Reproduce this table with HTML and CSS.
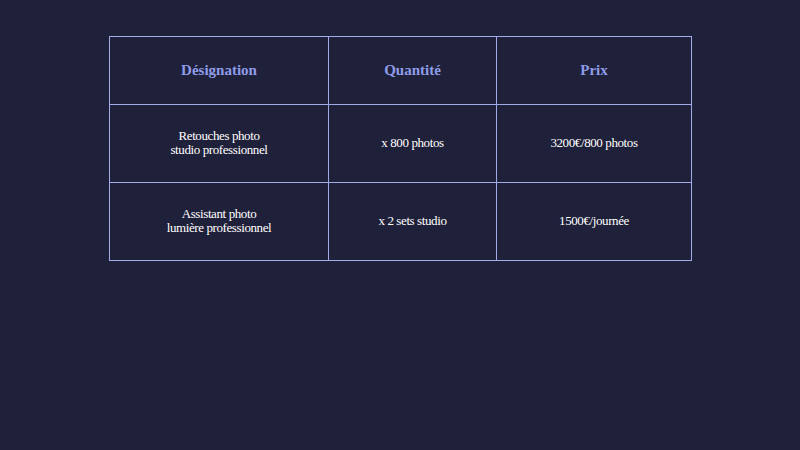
FILE: index.html
```html
<!DOCTYPE html>
<html lang="fr">
<head>
<meta charset="utf-8">
<link rel="stylesheet" href="styles.css">
</head>
<body>
<main class="page">
  <table class="price-table">
    <colgroup>
      <col class="c1"><col class="c2"><col class="c3">
    </colgroup>
    <thead>
      <tr><th>Désignation</th><th>Quantité</th><th>Prix</th></tr>
    </thead>
    <tbody>
      <tr><td>Retouches photo<br>studio professionnel</td><td>x 800 photos</td><td>3200€/800 photos</td></tr>
      <tr><td>Assistant photo<br>lumière professionnel</td><td>x 2 sets studio</td><td>1500€/journée</td></tr>
    </tbody>
  </table>
</main>
</body>
</html>
```
FILE: styles.css
```css
html, body {
  margin: 0;
  padding: 0;
  background: #1f2039;
}
.page {
  padding-top: 36px;
  padding-left: 1px;
  display: flex;
  justify-content: center;
  font-family: "Liberation Serif", "Times New Roman", serif;
}
.price-table {
  border-collapse: collapse;
  width: 582px;
  table-layout: fixed;
}
.c1 { width: 219px; }
.c2 { width: 168px; }
.c3 { width: 195px; }
.price-table th,
.price-table td {
  border: 1px solid #a3abe6;
  text-align: center;
  vertical-align: middle;
  padding: 0;
}
.price-table th {
  height: 67px;
  color: #8f9ce9;
  font-size: 15px;
  font-weight: bold;
}
.price-table td {
  height: 75px;
  padding-bottom: 2px;
  color: #ffffff;
  font-size: 13px;
  line-height: 14px;
  letter-spacing: -0.4px;
}
```
